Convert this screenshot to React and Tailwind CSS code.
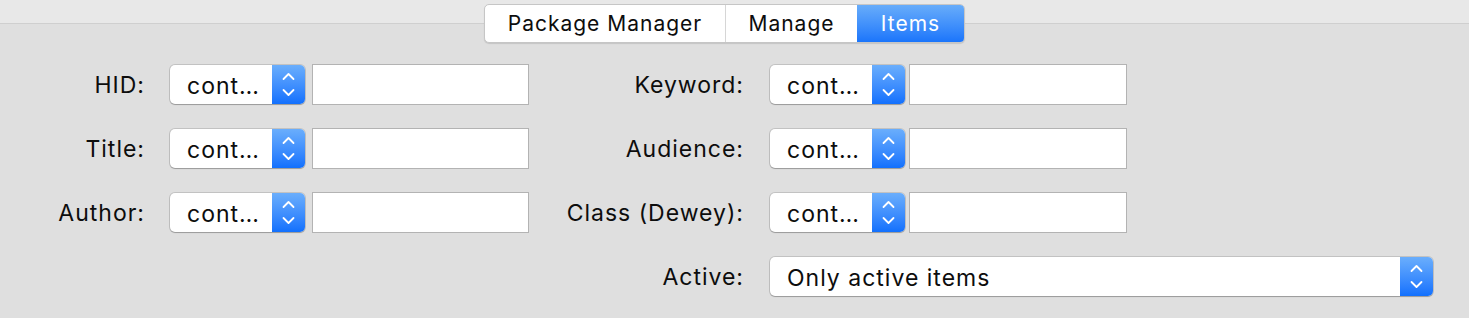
import React from "react";

function Chevrons() {
  return (
    <svg viewBox="0 0 33 39" className="w-[33px] h-full" fill="none">
      <path d="M11.5 14 L16.5 9 L21.5 14" stroke="white" strokeWidth="1.8" strokeLinecap="round" strokeLinejoin="round" />
      <path d="M11.5 25 L16.5 30 L21.5 25" stroke="white" strokeWidth="1.8" strokeLinecap="round" strokeLinejoin="round" />
    </svg>
  );
}

function Popup({ value, wide }) {
  return (
    <div
      className={`flex h-[39px] ${wide ? "w-[663px]" : "w-[135px]"} rounded-[5px] bg-white shadow-[0_0_0_1px_rgba(0,0,0,0.13),0_1px_1px_rgba(0,0,0,0.2)] overflow-hidden`}>
      <span className="flex-1 pl-[17px] pt-[3px] flex items-center text-[23px] tracking-[1px] text-[#0d0d0d] whitespace-nowrap">
        {value}
      </span>
      <div className="w-[33px] bg-gradient-to-b from-[#6aaefc] to-[#1170fd]">
        <Chevrons />
      </div>
    </div>
  );
}

function Field({ w }) {
  return <div className={`h-[41px] ${w} bg-white border border-[#b3b3b3]`}></div>;
}

function Row({ leftLabel, rightLabel }) {
  return (
    <div className="flex items-center h-[41px]">
      <span className="w-[145px] pt-[2px] text-right text-[23px] tracking-[1px] text-[#0d0d0d]">{leftLabel}</span>
      <div className="ml-[25px]">
        <Popup value="cont…" />
      </div>
      <div className="ml-[7px]">
        <Field w="w-[217px]" />
      </div>
      <span className="w-[215px] pt-[2px] text-right text-[23px] tracking-[1px] text-[#0d0d0d]">{rightLabel}</span>
      <div className="ml-[26px]">
        <Popup value="cont…" />
      </div>
      <div className="ml-[4px]">
        <Field w="w-[218px]" />
      </div>
    </div>
  );
}

export default function App() {
  return (
    <div
      className="w-[1469px] h-[318px] bg-[#dfdfdf] overflow-hidden"
      style={{ fontFamily: "Inter, 'Liberation Sans', sans-serif" }}>
      {/* Toolbar strip */}
      <div className="relative h-[24px] bg-[#e8e8e8] border-b border-[#cfcfcf]">
        <div className="absolute left-[484px] top-[4px] flex h-[39px] rounded-[5px] bg-white border border-[#c6c6c6] shadow-[0_1px_1px_rgba(0,0,0,0.12)] overflow-hidden text-[21px] tracking-[1px]">
          <div className="w-[241px] flex items-center justify-center text-[#0d0d0d] border-r border-[#d6d6d6]">
            Package Manager
          </div>
          <div className="w-[131px] flex items-center justify-center text-[#0d0d0d]">
            Manage
          </div>
          <div className="w-[107px] flex items-center justify-center text-white bg-gradient-to-b from-[#67acfa] to-[#1a75fb]">
            Items
          </div>
        </div>
      </div>

      {/* Search form */}
      <div className="pt-[40px] flex flex-col gap-[23px]">
        <Row leftLabel="HID:" rightLabel="Keyword:" />
        <Row leftLabel="Title:" rightLabel="Audience:" />
        <Row leftLabel="Author:" rightLabel="Class (Dewey):" />
        <div className="flex items-center h-[41px]">
          <span className="w-[744px] pt-[2px] text-right text-[23px] tracking-[1px] text-[#0d0d0d]">Active:</span>
          <div className="ml-[26px]">
            <Popup value="Only active items" wide />
          </div>
        </div>
      </div>
    </div>
  );
}
